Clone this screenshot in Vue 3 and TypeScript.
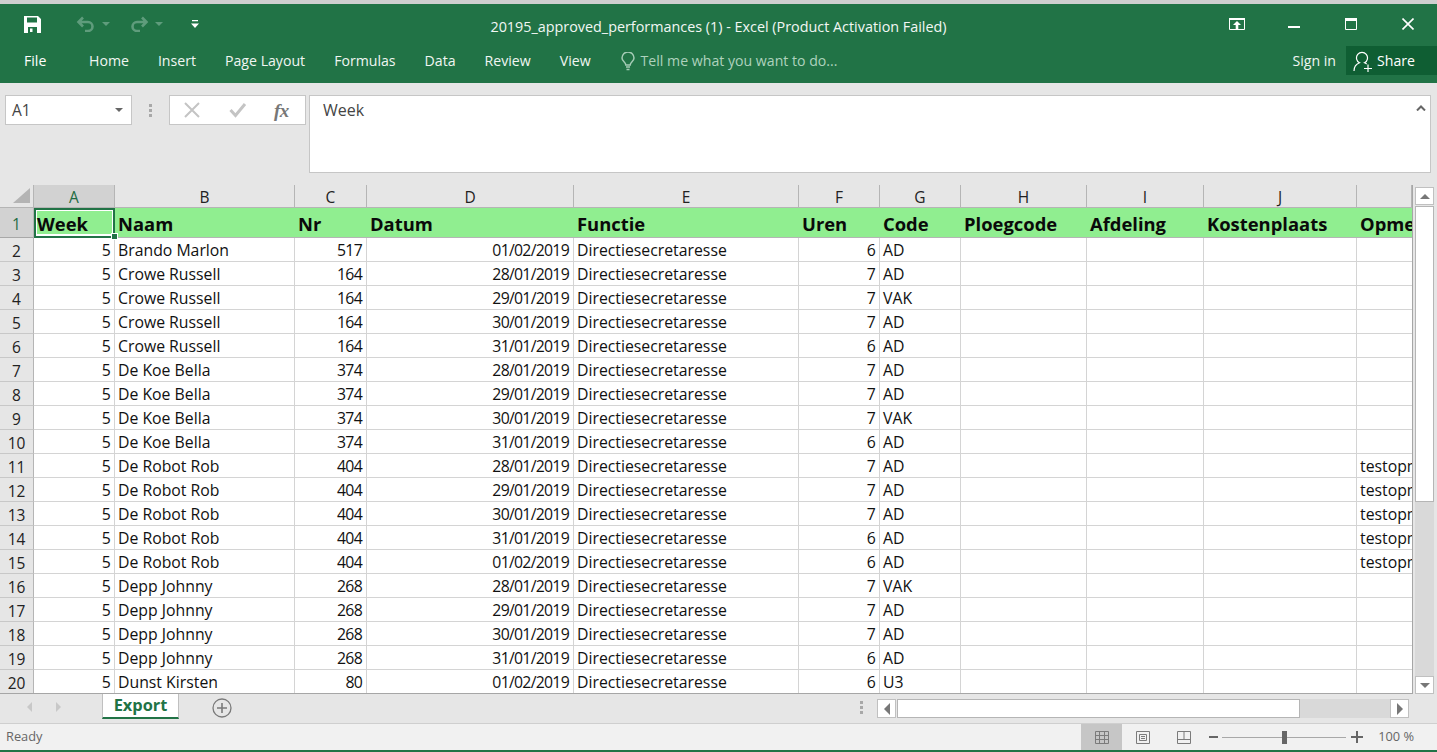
<script setup lang="ts">
interface Row { n: string; nr: string; d: string; u: string; c: string; o?: string }
const cols = ['A', 'B', 'C', 'D', 'E', 'F', 'G', 'H', 'I', 'J', '']
const heads = ['Week', 'Naam', 'Nr', 'Datum', 'Functie', 'Uren', 'Code', 'Ploegcode', 'Afdeling', 'Kostenplaats', 'Opmerking']
const tabs = ['Home', 'Insert', 'Page Layout', 'Formulas', 'Data', 'Review', 'View']
const rows: Row[] = [
  { n: 'Brando Marlon', nr: '517', d: '01/02/2019', u: '6', c: 'AD' },
  { n: 'Crowe Russell', nr: '164', d: '28/01/2019', u: '7', c: 'AD' },
  { n: 'Crowe Russell', nr: '164', d: '29/01/2019', u: '7', c: 'VAK' },
  { n: 'Crowe Russell', nr: '164', d: '30/01/2019', u: '7', c: 'AD' },
  { n: 'Crowe Russell', nr: '164', d: '31/01/2019', u: '6', c: 'AD' },
  { n: 'De Koe Bella', nr: '374', d: '28/01/2019', u: '7', c: 'AD' },
  { n: 'De Koe Bella', nr: '374', d: '29/01/2019', u: '7', c: 'AD' },
  { n: 'De Koe Bella', nr: '374', d: '30/01/2019', u: '7', c: 'VAK' },
  { n: 'De Koe Bella', nr: '374', d: '31/01/2019', u: '6', c: 'AD' },
  { n: 'De Robot Rob', nr: '404', d: '28/01/2019', u: '7', c: 'AD', o: 'testopmerking' },
  { n: 'De Robot Rob', nr: '404', d: '29/01/2019', u: '7', c: 'AD', o: 'testopmerking' },
  { n: 'De Robot Rob', nr: '404', d: '30/01/2019', u: '7', c: 'AD', o: 'testopmerking' },
  { n: 'De Robot Rob', nr: '404', d: '31/01/2019', u: '6', c: 'AD', o: 'testopmerking' },
  { n: 'De Robot Rob', nr: '404', d: '01/02/2019', u: '6', c: 'AD', o: 'testopmerking' },
  { n: 'Depp Johnny', nr: '268', d: '28/01/2019', u: '7', c: 'VAK' },
  { n: 'Depp Johnny', nr: '268', d: '29/01/2019', u: '7', c: 'AD' },
  { n: 'Depp Johnny', nr: '268', d: '30/01/2019', u: '7', c: 'AD' },
  { n: 'Depp Johnny', nr: '268', d: '31/01/2019', u: '6', c: 'AD' },
  { n: 'Dunst Kirsten', nr: '80', d: '01/02/2019', u: '6', c: 'U3' },
]
</script>

<template>
  <div class="app">
    <header class="chrome">
      <div class="titlebar">
        <div class="qat">
          <svg class="save" width="17" height="17" viewBox="0 0 17 17"><path fill="#fff" fill-rule="evenodd" d="M0 0h14l3 3v14H0zM3 1.500v5h10v-5zM4 11v6h9v-6zM6 12.500h2.500V16H6z"/></svg>
          <svg class="undo" width="20" height="16" viewBox="0 0 20 16"><path fill="none" stroke="#5f9c7c" stroke-width="2.600" d="M7 1.500 2.500 6 7 10.500M3 6h9a4.500 4.500 0 0 1 0 9H9"/></svg>
          <i class="caret dim"></i>
          <svg class="redo" width="20" height="16" viewBox="0 0 20 16"><path fill="none" stroke="#5f9c7c" stroke-width="2.600" d="M13 1.500 17.500 6 13 10.500M17 6H8a4.500 4.500 0 0 0 0 9h3"/></svg>
          <i class="caret dim"></i>
          <svg class="more" width="9" height="9" viewBox="0 0 9 9"><path fill="#fff" d="M1 0h6v1.200H1zM0 3.500h8L4 8z"/></svg>
        </div>
        <div class="title">20195_approved_performances (1) - Excel (Product Activation Failed)</div>
        <div class="winbtns">
          <svg class="restore" width="16" height="12" viewBox="0 0 16 12"><path fill="none" stroke="#fff" d="M.5.500h15v11H.5z"/><path fill="#fff" d="M0 0h16v2H0zM8 3l4 4H9.300v4.500H6.700V7H4z"/></svg>
          <svg width="12" height="12" viewBox="0 0 12 12"><path fill="#fff" d="M0 8h12v2H0z"/></svg>
          <svg width="12" height="12" viewBox="0 0 12 12"><path fill="none" stroke="#fff" d="M.5.500h11v11H.5z"/><path fill="#fff" d="M0 0h12v3H0z"/></svg>
          <svg width="12" height="12" viewBox="0 0 12 12"><path fill="none" stroke="#fff" stroke-width="1.600" d="M.5.500l11 11M11.500.500l-11 11"/></svg>
        </div>
      </div>
      <nav class="tabs">
        <span class="file">File</span>
        <span v-for="t in tabs" :key="t" class="tab">{{ t }}</span>
        <svg class="bulb" width="14" height="19" viewBox="0 0 14 19"><path fill="none" stroke="#a4cbb5" stroke-width="1.500" d="M4.800 13C4.800 10 1 9.500 1 6a6 6 0 0 1 12 0c0 3.500-3.800 4-3.800 7z"/><path fill="none" stroke="#a4cbb5" stroke-width="1.500" d="M5 15h4M5.500 17.500h3"/></svg>
        <span class="tell">Tell me what you want to do...</span>
        <span class="signin">Sign in</span>
        <span class="share">
          <svg width="21" height="22" viewBox="0 0 21 22"><path fill="none" stroke="#fff" stroke-width="1.200" d="M1 21c0-4.500 2.500-7 5.500-8.200a5.500 5.500 0 1 1 5 0c1 .4 1.500.7 2.200 1.200M11 18.500h8M15 14.500v8"/></svg>
          <span>Share</span>
        </span>
      </nav>
    </header>

    <section class="formula">
      <div class="namebox"><span>A1</span><i class="caret gray"></i></div>
      <div class="grip"><i></i><i></i><i></i></div>
      <div class="fbtns">
        <svg width="16" height="16" viewBox="0 0 16 16"><path stroke="#c4c4c4" stroke-width="2" fill="none" d="M1 1l14 14M15 1 1 15"/></svg>
        <svg width="18" height="16" viewBox="0 0 18 16"><path stroke="#c4c4c4" stroke-width="3" fill="none" d="M1.500 8l5 5.500L16 2"/></svg>
        <span class="fx">fx</span>
      </div>
      <div class="finput">
        <span>Week</span>
        <svg class="fup" width="10" height="6" viewBox="0 0 10 6"><path fill="none" stroke="#666" stroke-width="2" d="M1 5.500l4-4 4 4"/></svg>
      </div>
    </section>

    <section class="sheet">
      <div class="grid">
        <div class="corner"><svg width="17" height="15" viewBox="0 0 17 15"><path fill="#b4b4b4" d="M17 0v15H0z"/></svg></div>
        <div v-for="(c, i) in cols" :key="i" class="ch" :class="{ sel: i === 0 }">{{ c }}</div>

        <div class="rh first sel">1</div>
        <div v-for="(h, i) in heads" :key="h" class="hd" :class="{ active: i === 0 }">
          <span>{{ h }}</span>
          <i v-if="i === 0" class="handle"></i>
        </div>

        <template v-for="(r, i) in rows" :key="i">
          <div class="rh">{{ i + 2 }}</div>
          <div class="c num">5</div>
          <div class="c">{{ r.n }}</div>
          <div class="c num">{{ r.nr }}</div>
          <div class="c num">{{ r.d }}</div>
          <div class="c">Directiesecretaresse</div>
          <div class="c num">{{ r.u }}</div>
          <div class="c">{{ r.c }}</div>
          <div class="c"></div>
          <div class="c"></div>
          <div class="c"></div>
          <div class="c last">{{ r.o }}</div>
        </template>
      </div>
      <div class="vscroll">
        <div class="sbtn"><i class="tri up"></i></div>
        <div class="vthumb"></div>
        <div class="vtrack"></div>
        <div class="sbtn"><i class="tri down"></i></div>
      </div>
    </section>

    <section class="sheetbar">
      <div class="navs"><i class="tri left"></i><i class="tri right"></i></div>
      <div class="sheettab">Export</div>
      <svg class="add" width="20" height="20" viewBox="0 0 20 20"><circle cx="10" cy="10" r="9" fill="none" stroke="#7a7a7a" stroke-width="1.300"/><path fill="#7a7a7a" d="M5 9.200h10v1.600H5zM9.200 5h1.600v10H9.200z"/></svg>
      <div class="grip2"><i></i><i></i><i></i></div>
      <div class="hscroll">
        <div class="hbtn"><i class="tri blk-left"></i></div>
        <div class="hthumb"></div>
        <div class="htrack"></div>
        <div class="hbtn"><i class="tri blk-right"></i></div>
      </div>
    </section>

    <footer class="status">
      <span class="ready">Ready</span>
      <div class="views">
        <span class="view on"><svg width="14" height="13" viewBox="0 0 14 13"><path fill="none" stroke="#7b7b7b" d="M.5.500h13v12H.5zM.5 4.500h13M.5 8.500h13M4.500.500v12M9.500.500v12"/></svg></span>
        <span class="view"><svg width="14" height="13" viewBox="0 0 14 13"><path fill="none" stroke="#7b7b7b" d="M.5.500h13v12H.5zM3.500 3.500h7v6h-7zM5 5.500h4M5 7.500h4"/></svg></span>
        <span class="view"><svg width="14" height="13" viewBox="0 0 14 13"><path fill="none" stroke="#7b7b7b" d="M.5.500h13v12H.5zM.5 8.500h6.500V.500M7 8.500h6.500"/></svg></span>
      </div>
      <div class="zoom">
        <i class="zminus"></i>
        <div class="zline"><i class="zthumb"></i></div>
        <i class="zplus"></i>
      </div>
      <span class="pct">100 %</span>
    </footer>
  </div>
</template>

<style>
html, body { margin: 0; padding: 0; overflow: hidden; background: #e6e6e6; }
</style>

<style scoped>
.app { width: 1437px; height: 752px; display: flex; flex-direction: column; font-family: "Open Sans", "Noto Sans", sans-serif; overflow: hidden; background: #e6e6e6; color: #111; }
.chrome { height: 83px; box-sizing: border-box; background: #217346; border-top: 4px solid #cfcfcf; color: #fff; display: flex; flex-direction: column; }
.titlebar { height: 42px; position: relative; display: flex; align-items: flex-start; }
.qat { display: flex; align-items: center; padding-left: 24px; height: 40px; }
.undo { margin-left: 35px; }
.redo { margin-left: 19px; }
.more { margin-left: 28px; }
.caret { display: inline-block; width: 0; height: 0; border-left: 4px solid transparent; border-right: 4px solid transparent; border-top: 4px solid #666; }
.caret.dim { border-top-color: #5f9c7c; margin-left: 6px; }
.title { position: absolute; left: 0; right: 0; top: 13px; text-align: center; font-size: 14.370px; line-height: 20px; color: #f2f7f4; }
.winbtns { margin-left: auto; display: flex; align-items: center; gap: 45px; padding-right: 23px; height: 40px; }
.restore { margin-right: -2px; }
.tabs { height: 37px; display: flex; align-items: flex-start; font-size: 14.130px; line-height: 30px; }
.file { margin-left: 24px; width: 36px; color: #fff; }
.tab { margin-left: 29px; color: #f0f6f2; }
.bulb { margin: 6px 0 0 30px; }
.tell { margin-left: 6px; color: #aed2bd; }
.signin { margin-left: auto; color: #f0f6f2; }
.share { margin-left: 10px; width: 91px; height: 29px; box-sizing: border-box; background: #0f5e33; display: flex; align-items: center; gap: 3px; padding-left: 7px; }

.formula { height: 102px; box-sizing: border-box; padding-top: 12px; display: flex; align-items: flex-start; background: #e6e6e6; }
.namebox { margin-left: 5px; width: 127px; height: 30px; box-sizing: border-box; background: #fff; border: 1px solid #c6c6c6; display: flex; align-items: center; justify-content: space-between; padding: 0 8px 0 6px; font-size: 15.500px; color: #444; }
.grip { width: 37px; height: 30px; display: flex; flex-direction: column; align-items: center; justify-content: center; gap: 2px; }
.grip i { width: 3px; height: 3px; background: #a8a8a8; }
.fbtns { width: 137px; height: 30px; box-sizing: border-box; background: #fff; border: 1px solid #c6c6c6; display: flex; align-items: center; padding-left: 14px; gap: 29px; }
.fx { font-family: "Liberation Serif", serif; font-style: italic; font-weight: 700; font-size: 19px; color: #777; margin-left: -2px; line-height: 1; letter-spacing: -.5px; }
.finput { margin-left: 3px; width: 1122px; height: 78px; box-sizing: border-box; background: #fff; border: 1px solid #c6c6c6; padding: 3px 13px; font-size: 16px; line-height: 22px; color: #444; position: relative; }
.fup { position: absolute; right: 4px; top: 9px; }

.sheet { height: 509px; display: flex; align-items: flex-start; background: #e6e6e6; }
.grid { width: 1413px; box-sizing: border-box; display: grid; grid-template-columns: 34px 81px 180px 72px 207px 225px 81px 81px 126px 117px 153px 55px; grid-template-rows: 23px 30px repeat(19, 24px); border-right: 1px solid #a6a6a6; border-bottom: 1px solid #a6a6a6; overflow: hidden; height: 509px; background: #fff; }
.corner { background: #e6e6e6; border-right: 1px solid #b5b5b5; border-bottom: 1px solid #b5b5b5; box-sizing: border-box; display: flex; justify-content: flex-end; align-items: flex-end; padding: 0 3px 4px 0; }
.ch { background: #e6e6e6; box-sizing: border-box; border-right: 1px solid #b5b5b5; border-bottom: 1px solid #b5b5b5; text-align: center; font-size: 15.500px; line-height: 25px; color: #222; }
.ch.sel { background: #d2d2d2; color: #1e6b42; }
.rh { background: #e6e6e6; box-sizing: border-box; border-right: 1px solid #b5b5b5; border-bottom: 1px solid #c8c8c8; text-align: center; font-size: 15.500px; line-height: 26px; color: #222; }
.rh.first { line-height: 32px; }
.rh.sel { background: #d2d2d2; color: #1e6b42; border-bottom-color: #a8a8a8; }
.hd { background: #90ee90; box-sizing: border-box; border-bottom: 1px solid #b5b5b5; padding-left: 3px; font-weight: 700; font-size: 18.400px; line-height: 32px; color: #0a0a0a; white-space: nowrap; overflow: hidden; position: relative; }
.hd.active { outline: 2px solid #217346; outline-offset: -2px; box-shadow: inset 0 0 0 3px #fff; overflow: visible; z-index: 1; padding-left: 3px; }
.handle { position: absolute; right: -3px; bottom: -3px; width: 5px; height: 5px; background: #217346; border: 1px solid #fff; }
.c { box-sizing: border-box; border-right: 1px solid #d4d4d4; border-bottom: 1px solid #d4d4d4; padding: 0 3px; font-size: 15.800px; line-height: 24px; white-space: nowrap; overflow: hidden; color: #111; }
.c.num { text-align: right; letter-spacing: -.72px; padding-right: 4px; }
.c.last { border-right: 0; }

.vscroll { margin-left: 2px; width: 19px; display: flex; flex-direction: column; height: 507px; margin-top: 2px; }
.sbtn { height: 18px; flex: none; background: #fff; border: 1px solid #c0c0c0; box-sizing: border-box; display: flex; align-items: center; justify-content: center; }
.vthumb { margin-top: 1px; height: 296px; flex: none; background: #fff; border: 1px solid #b5b5b5; box-sizing: border-box; }
.vtrack { flex: 1; background: #d9d9d9; }
.tri { display: block; width: 0; height: 0; }
.tri.up { border-left: 5px solid transparent; border-right: 5px solid transparent; border-bottom: 5px solid #777; }
.tri.down { border-left: 5px solid transparent; border-right: 5px solid transparent; border-top: 5px solid #777; }
.tri.left { border-top: 5px solid transparent; border-bottom: 5px solid transparent; border-right: 5px solid #c8c8c8; }
.tri.right { border-top: 5px solid transparent; border-bottom: 5px solid transparent; border-left: 5px solid #c8c8c8; }
.tri.blk-left { border-top: 6px solid transparent; border-bottom: 6px solid transparent; border-right: 6px solid #777; }
.tri.blk-right { border-top: 6px solid transparent; border-bottom: 6px solid transparent; border-left: 6px solid #777; }

.sheetbar { height: 30px; box-sizing: border-box; border-bottom: 1px solid #cfcfcf; display: flex; align-items: flex-start; }
.navs { width: 102px; height: 26px; box-sizing: border-box; padding-left: 27px; display: flex; align-items: center; gap: 24px; }
.sheettab { width: 77px; height: 25px; box-sizing: border-box; background: #fff; border-left: 1px solid #c0c0c0; border-right: 1px solid #c0c0c0; border-bottom: 2px solid #217346; text-align: center; font-weight: 700; font-size: 16.400px; line-height: 22px; color: #217346; }
.add { margin: 4px 0 0 33px; }
.grip2 { margin-left: 627px; width: 4px; height: 26px; display: flex; flex-direction: column; align-items: center; justify-content: center; gap: 2px; }
.grip2 i { width: 3px; height: 3px; background: #a8a8a8; }
.hscroll { margin-left: 14px; margin-top: 5px; display: flex; height: 19px; }
.hbtn { width: 19px; box-sizing: border-box; background: #fff; border: 1px solid #c0c0c0; display: flex; align-items: center; justify-content: center; }
.hthumb { margin-left: 1px; width: 403px; background: #fff; border: 1px solid #b5b5b5; box-sizing: border-box; }
.htrack { width: 90px; background: #d9d9d9; }

.status { height: 28px; box-sizing: border-box; background: #f1f1f1; border-bottom: 2px solid #217346; display: flex; align-items: stretch; font-size: 12.800px; color: #666; }
.ready { margin-left: 6px; line-height: 25px; }
.views { margin-left: auto; display: flex; }
.view { width: 41px; display: flex; align-items: center; justify-content: center; }
.view.on { background: #c6c6c6; }
.zoom { margin-left: 5px; display: flex; align-items: center; gap: 4px; width: 155px; }
.zminus { width: 9px; height: 2px; background: #666; }
.zline { width: 124px; height: 1px; background: #a8a8a8; position: relative; }
.zthumb { position: absolute; left: 60px; top: -6px; width: 5px; height: 13px; background: #666; }
.zplus { width: 12px; height: 12px; margin-left: 1px; background: linear-gradient(#666, #666) center / 12px 2px no-repeat, linear-gradient(#666, #666) center / 2px 12px no-repeat; }
.pct { margin-left: 14px; margin-right: 23px; line-height: 25px; }
</style>
